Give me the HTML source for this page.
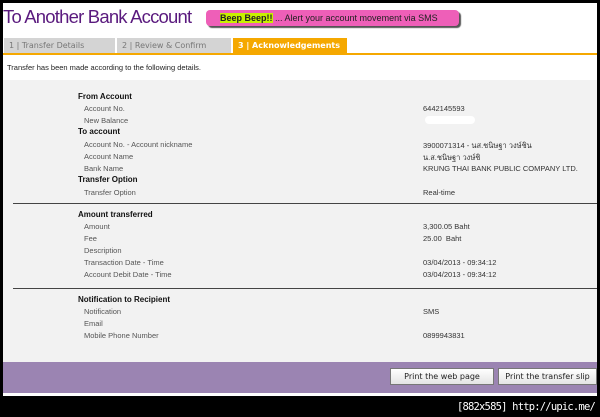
<!DOCTYPE html>
<html><head><meta charset="utf-8"><style>
*{margin:0;padding:0;box-sizing:border-box}
body{width:600px;height:417px;background:#000;position:relative;overflow:hidden;font-family:"Liberation Sans","Noto Sans CJK SC",sans-serif}
.page{position:absolute;left:3px;top:3px;width:594px;height:393px;background:#fff}
.a{position:absolute;white-space:nowrap}
.h{font-size:8px;font-weight:bold;color:#111;left:78px}
.l{font-size:7.5px;color:#555;left:84px}
.v{font-size:7.5px;color:#333;left:423px}
.tab{position:absolute;top:38px;height:15px;font-size:8px;line-height:15px;padding-left:5px;font-family:"DejaVu Sans",sans-serif}
.btn{position:absolute;top:368px;height:17px;background:linear-gradient(#fff,#e4e4e4);border:1px solid #777;font-size:8px;line-height:15px;text-align:center;font-family:"DejaVu Sans",sans-serif;color:#222}
</style></head><body>
<div class="page"></div>
<div class="a" style="left:3px;top:6px;font-size:18.5px;color:#5a1a7e;letter-spacing:-0.8px">To Another Bank Account</div>
<div class="a" style="left:206px;top:10px;width:253px;height:16px;background:#ee5fb8;border-radius:4px;box-shadow:2px 2px 1px #555;font-size:9px;line-height:16px;padding-left:14px;color:#222"><span style="background:#c8f000;color:#222;font-weight:bold">Beep Beep!!</span> ... Alert your account movement via SMS</div>
<div class="tab" style="left:4px;width:111px;background:#d4d4d4;color:#777">1 | Transfer Details</div>
<div class="tab" style="left:117px;width:114px;background:#d4d4d4;color:#777">2 | Review &amp; Confirm</div>
<div class="tab" style="left:233px;width:114px;background:#f5a800;color:#fff;font-weight:bold">3 | Acknowledgements</div>
<div class="a" style="left:3px;top:53px;width:594px;height:2px;background:#f5a800"></div>
<div class="a" style="left:7px;top:63px;font-size:7.5px;color:#222">Transfer has been made according to the following details.</div>
<div class="a" style="left:3px;top:80px;width:594px;height:282px;background:#f2f2f2"></div>
<div class="a h" style="top:92px">From Account</div>
<div class="a l" style="top:104px">Account No.</div><div class="a v" style="top:104px">6442145593</div>
<div class="a l" style="top:116px">New Balance</div>
<div class="a" style="left:425px;top:116px;width:50px;height:8px;background:#fff;border-radius:4px"></div>
<div class="a h" style="top:127px">To account</div>
<div class="a l" style="top:140px">Account No. - Account nickname</div><div class="a v" style="top:140px">3900071314 - นส.ชนิษฐา วงษ์ชิน</div>
<div class="a l" style="top:152px">Account Name</div><div class="a v" style="top:152px">น.ส.ชนิษฐา วงษ์ชิ</div>
<div class="a l" style="top:164px">Bank Name</div><div class="a v" style="top:164px">KRUNG THAI BANK PUBLIC COMPANY LTD.</div>
<div class="a h" style="top:175px">Transfer Option</div>
<div class="a l" style="top:188px">Transfer Option</div><div class="a v" style="top:188px">Real-time</div>
<div class="a" style="left:13px;top:203px;width:584px;height:1px;background:#444"></div>
<div class="a h" style="top:210px">Amount transferred</div>
<div class="a l" style="top:222px">Amount</div><div class="a v" style="top:222px">3,300.05 Baht</div>
<div class="a l" style="top:234px">Fee</div><div class="a v" style="top:234px">25.00&nbsp; Baht</div>
<div class="a l" style="top:246px">Description</div>
<div class="a l" style="top:258px">Transaction Date - Time</div><div class="a v" style="top:258px">03/04/2013 - 09:34:12</div>
<div class="a l" style="top:270px">Account Debit Date - Time</div><div class="a v" style="top:270px">03/04/2013 - 09:34:12</div>
<div class="a" style="left:13px;top:288px;width:584px;height:1px;background:#444"></div>
<div class="a h" style="top:295px">Notification to Recipient</div>
<div class="a l" style="top:307px">Notification</div><div class="a v" style="top:307px">SMS</div>
<div class="a l" style="top:319px">Email</div>
<div class="a l" style="top:331px">Mobile Phone Number</div><div class="a v" style="top:331px">0899943831</div>
<div class="a" style="left:3px;top:362px;width:594px;height:31px;background:#9b84b2"></div>
<div class="btn" style="left:390px;width:104px">Print the web page</div>
<div class="btn" style="left:498px;width:99px">Print the transfer slip</div>
<div class="a" style="right:5px;top:401px;font-size:10.5px;color:#fff;font-family:'DejaVu Sans Mono',monospace;letter-spacing:-0.8px">[882x585] http://upic.me/</div>
</body></html>
